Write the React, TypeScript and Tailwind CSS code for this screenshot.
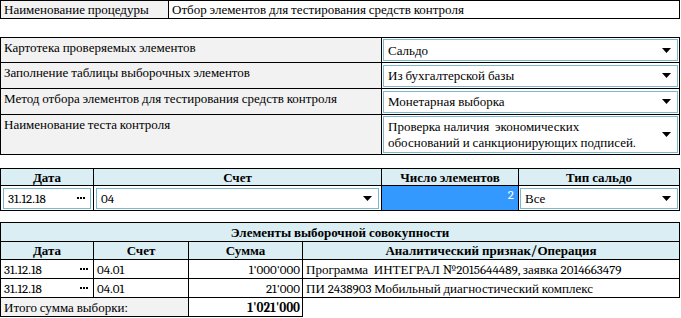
import React from 'react';

const Arrow = () => (
  <svg width="9" height="5" viewBox="0 0 9 5" className="shrink-0">
    <path d="M0 0h9L4.5 5z" fill="#000" />
  </svg>
);

const Dots = () => (
  <svg width="8" height="2" viewBox="0 0 8 2" className="shrink-0">
    <rect x="0" y="0" width="2" height="2" fill="#000" />
    <rect x="3" y="0" width="2" height="2" fill="#000" />
    <rect x="6" y="0" width="2" height="2" fill="#000" />
  </svg>
);

const Select = ({ children, className = '' }: { children: React.ReactNode; className?: string }) => (
  <div className={`flex items-center justify-between border border-[#7ab8cc] bg-white pl-[4px] pr-[6px] ${className}`}>
    <div>{children}</div>
    <Arrow />
  </div>
);

const cell = 'border border-black p-0';
const head = 'border border-black p-0 bg-[#daeef3] font-bold text-center';

const settings = [
  { label: 'Картотека проверяемых элементов', value: 'Сальдо', h: 'h-[25px]' },
  { label: 'Заполнение таблицы выборочных элементов', value: 'Из бухгалтерской базы', h: 'h-[26px]' },
  { label: 'Метод отбора элементов для тестирования средств контроля', value: 'Монетарная выборка', h: 'h-[26px]' },
];

const rows = [
  { date: '31.12.18', account: '04.01', sum: "1'000'000", note: 'Программа  ИНТЕГРАЛ №2015644489, заявка 2014663479' },
  { date: '31.12.18', account: '04.01', sum: "21'000", note: 'ПИ 2438903 Мобильный диагностический комплекс' },
];

export default function App() {
  return (
    <div className="w-[681px] h-[318px] overflow-hidden bg-white text-black text-[13px] leading-[15px] font-serif [font-family:Liberation_Serif,serif] whitespace-pre">
      {/* Procedure name */}
      <table className="w-[680px] table-fixed border-collapse">
        <colgroup>
          <col className="w-[168px]" />
          <col />
        </colgroup>
        <tbody>
          <tr className="h-[18px]">
            <td className={`${cell} bg-[#f2f2f2] pl-[3px]`}>Наименование процедуры</td>
            <td className={`${cell} pl-[3px]`}>Отбор элементов для тестирования средств контроля</td>
          </tr>
        </tbody>
      </table>

      {/* Settings */}
      <table className="mt-[18px] w-[680px] table-fixed border-collapse">
        <colgroup>
          <col className="w-[381px]" />
          <col />
        </colgroup>
        <tbody>
          {settings.map((s) => (
            <tr key={s.label} className={s.h}>
              <td className={`${cell} bg-[#f2f2f2] pl-[3px] align-top pt-[2px]`}>{s.label}</td>
              <td className={`${cell} px-[1px]`}>
                <Select className="h-[22px]">{s.value}</Select>
              </td>
            </tr>
          ))}
          <tr className="h-[40px]">
            <td className={`${cell} bg-[#f2f2f2] pl-[3px] align-top pt-[2px]`}>Наименование теста контроля</td>
            <td className={`${cell} px-[1px]`}>
              <Select className="h-[37px] leading-[16px]">
                {'Проверка наличия  экономических\nобоснований и санкционирующих подписей.'}
              </Select>
            </td>
          </tr>
        </tbody>
      </table>

      {/* Filter */}
      <table className="mt-[13px] w-[680px] table-fixed border-collapse">
        <colgroup>
          <col className="w-[93px]" />
          <col className="w-[288px]" />
          <col className="w-[137px]" />
          <col />
        </colgroup>
        <tbody>
          <tr className="h-[17px]">
            <td className={head}>Дата</td>
            <td className={head}>Счет</td>
            <td className={head}>Число элементов</td>
            <td className={head}>Тип сальдо</td>
          </tr>
          <tr className="h-[25px]">
            <td className={`${cell} px-[2px]`}>
              <div className="flex h-[21px] items-center justify-between border border-[#7ab8cc] pl-[4px] pr-[5px]">
                <span>31.12.18</span>
                <Dots />
              </div>
            </td>
            <td className={`${cell} px-[2px]`}>
              <Select className="h-[21px]">04</Select>
            </td>
            <td className={`${cell} bg-[#3399ff] align-top text-right text-white pr-[4px] pt-[1px]`}>2</td>
            <td className={`${cell} px-[1px]`}>
              <Select className="h-[21px]">Все</Select>
            </td>
          </tr>
        </tbody>
      </table>

      {/* Sample elements */}
      <table className="mt-[11px] w-[680px] table-fixed border-collapse">
        <colgroup>
          <col className="w-[93px]" />
          <col className="w-[95px]" />
          <col className="w-[114px]" />
          <col />
        </colgroup>
        <tbody>
          <tr className="h-[19px]">
            <td className={head} colSpan={4}>Элементы выборочной совокупности</td>
          </tr>
          <tr className="h-[18px]">
            <td className={head}>Дата</td>
            <td className={head}>Счет</td>
            <td className={head}>Сумма</td>
            <td className={head}>Аналитический признак/Операция</td>
          </tr>
          {rows.map((r, i) => (
            <tr key={i} className="h-[19px]">
              <td className={`${cell} pl-[3px] pr-[5px]`}>
                <div className="flex items-center justify-between">
                  <span>{r.date}</span>
                  <Dots />
                </div>
              </td>
              <td className={`${cell} pl-[3px]`}>{r.account}</td>
              <td className={`${cell} pr-[2px] text-right`}>{r.sum}</td>
              <td className={`${cell} pl-[3px]`}>{r.note}</td>
            </tr>
          ))}
          <tr className="h-[19px]">
            <td className={`${cell} bg-[#f2f2f2] pl-[3px]`} colSpan={2}>Итого сумма выборки:</td>
            <td className={`${cell} pr-[2px] text-right font-bold`}>1'021'000</td>
          </tr>
        </tbody>
      </table>
    </div>
  );
}
